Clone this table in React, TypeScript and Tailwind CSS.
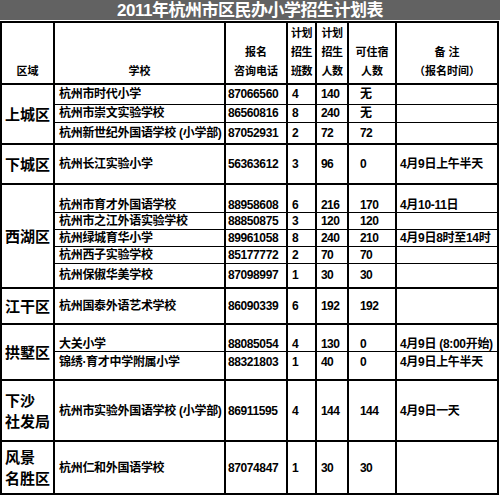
import React from "react";

type Row = {
  school: string;
  phone: string;
  classes: string;
  seats: string;
  board: string;
  note?: string;
  h: number;
  align?: "top" | "middle" | "bottom";
};

type Group = { district: string[]; rows: Row[] };

const groups: Group[] = [
  {
    district: ["上城区"],
    rows: [
      { school: "杭州市时代小学", phone: "87066560", classes: "4", seats: "140", board: "无", h: 20 },
      { school: "杭州市崇文实验学校", phone: "86560816", classes: "8", seats: "240", board: "无", h: 18 },
      { school: "杭州新世纪外国语学校 (小学部)", phone: "87052931", classes: "2", seats: "72", board: "72", h: 22 },
    ],
  },
  {
    district: ["下城区"],
    rows: [
      { school: "杭州长江实验小学", phone: "56363612", classes: "3", seats: "96", board: "0", note: "4月9日上午半天", h: 40 },
    ],
  },
  {
    district: ["西湖区"],
    rows: [
      { school: "杭州市育才外国语学校", phone: "88958608", classes: "6", seats: "216", board: "170", note: "4月10-11日", h: 28, align: "bottom" },
      { school: "杭州市之江外语实验学校", phone: "88850875", classes: "3", seats: "120", board: "120", h: 17 },
      { school: "杭州绿城育华小学", phone: "89961058", classes: "8", seats: "240", board: "210", note: "4月9日8时至14时", h: 17 },
      { school: "杭州西子实验学校", phone: "85177772", classes: "2", seats: "70", board: "70", h: 17 },
      { school: "杭州保俶华美学校", phone: "87098997", classes: "1", seats: "30", board: "30", h: 25 },
    ],
  },
  {
    district: ["江干区"],
    rows: [
      { school: "杭州国泰外语艺术学校", phone: "86090339", classes: "6", seats: "192", board: "192", h: 36 },
    ],
  },
  {
    district: ["拱墅区"],
    rows: [
      { school: "大关小学", phone: "88085054", classes: "4", seats: "130", board: "0", note: "4月9日 (8:00开始)", h: 27, align: "bottom" },
      { school: "锦绣·育才中学附属小学", phone: "88321803", classes: "1", seats: "40", board: "0", note: "4月9日上午半天", h: 29, align: "top" },
    ],
  },
  {
    district: ["下沙", "社发局"],
    rows: [
      { school: "杭州市实验外国语学校 (小学部)", phone: "86911595", classes: "4", seats: "144", board: "144", note: "4月9日一天", h: 61 },
    ],
  },
  {
    district: ["风景", "名胜区"],
    rows: [
      { school: "杭州仁和外国语学校", phone: "87074847", classes: "1", seats: "30", board: "30", h: 53 },
    ],
  },
];

const font = "font-['Liberation_Sans','Noto_Sans_CJK_SC',sans-serif]";

function alignClass(a?: "top" | "middle" | "bottom") {
  if (a === "bottom") return "align-bottom pb-0";
  if (a === "top") return "align-top pt-[3px]";
  return "align-middle";
}

export default function App() {
  return (
    <div className={`w-[500px] h-[495px] overflow-hidden bg-white ${font} text-black`}>
      <div className="h-[20px] bg-[#626262] flex items-center justify-center">
        <span className="text-white font-bold text-[17px] leading-none tracking-[-0.5px]">
          2011年杭州市区民办小学招生计划表
        </span>
      </div>
      <div className="pt-[1px]">
        <table className="table-fixed border-collapse w-[497px] border-2 border-black">
          <colgroup>
            <col className="w-[53px]" />
            <col className="w-[171px]" />
            <col className="w-[62px]" />
            <col className="w-[29px]" />
            <col className="w-[32px]" />
            <col className="w-[48px]" />
            <col className="w-[102px]" />
          </colgroup>
          <thead>
            <tr className="h-[62px] text-[11px] leading-[19px] font-bold">
              <th className="border-2 border-black align-bottom pb-[2px] p-0">区域</th>
              <th className="border-2 border-black align-bottom pb-[2px] p-0">学校</th>
              <th className="border-2 border-black align-bottom pb-[2px] p-0">
                报名
                <br />
                咨询电话
              </th>
              <th className="border-2 border-black align-bottom pb-[2px] p-0 tracking-[-0.5px]">
                计划
                <br />
                招生
                <br />
                班数
              </th>
              <th className="border-2 border-black align-bottom pb-[2px] p-0 tracking-[-0.5px]">
                计划
                <br />
                招生
                <br />
                人数
              </th>
              <th className="border-2 border-black align-bottom pb-[2px] p-0">
                可住宿
                <br />
                人数
              </th>
              <th className="border-2 border-black align-bottom pb-[2px] p-0">
                备 注
                <br />
                （报名时间）
              </th>
            </tr>
          </thead>
          <tbody>
            {groups.map((g) =>
              g.rows.map((r, i) => {
                const top = i === 0 ? "border-t-2" : "border-t";
                const cell = `border-x-2 border-black ${top} ${alignClass(r.align)} p-0 text-[12px] leading-[14px] font-bold whitespace-nowrap overflow-hidden`;
                return (
                  <tr key={r.school} style={{ height: r.h }}>
                    {i === 0 && (
                      <td
                        rowSpan={g.rows.length}
                        className="border-2 border-black align-middle p-0 pl-[3px] text-[15px] leading-[21px] font-bold whitespace-nowrap overflow-hidden"
                      >
                        {g.district.map((d) => (
                          <div key={d}>{d}</div>
                        ))}
                      </td>
                    )}
                    <td className={`${cell} pl-[4px] text-[11px] tracking-[-0.3px]`}>{r.school}</td>
                    <td className={`${cell} pl-[2px] tracking-[-0.4px]`}>{r.phone}</td>
                    <td className={`${cell} pl-[4px]`}>{r.classes}</td>
                    <td className={`${cell} pl-[4px] tracking-[-0.6px]`}>{r.seats}</td>
                    <td className={`${cell} pl-[11px] tracking-[-0.6px]`}>{r.board}</td>
                    <td className={`${cell} pl-[3px] text-[11px] tracking-[-0.3px]`}>{r.note ?? ""}</td>
                  </tr>
                );
              })
            )}
          </tbody>
        </table>
      </div>
    </div>
  );
}
